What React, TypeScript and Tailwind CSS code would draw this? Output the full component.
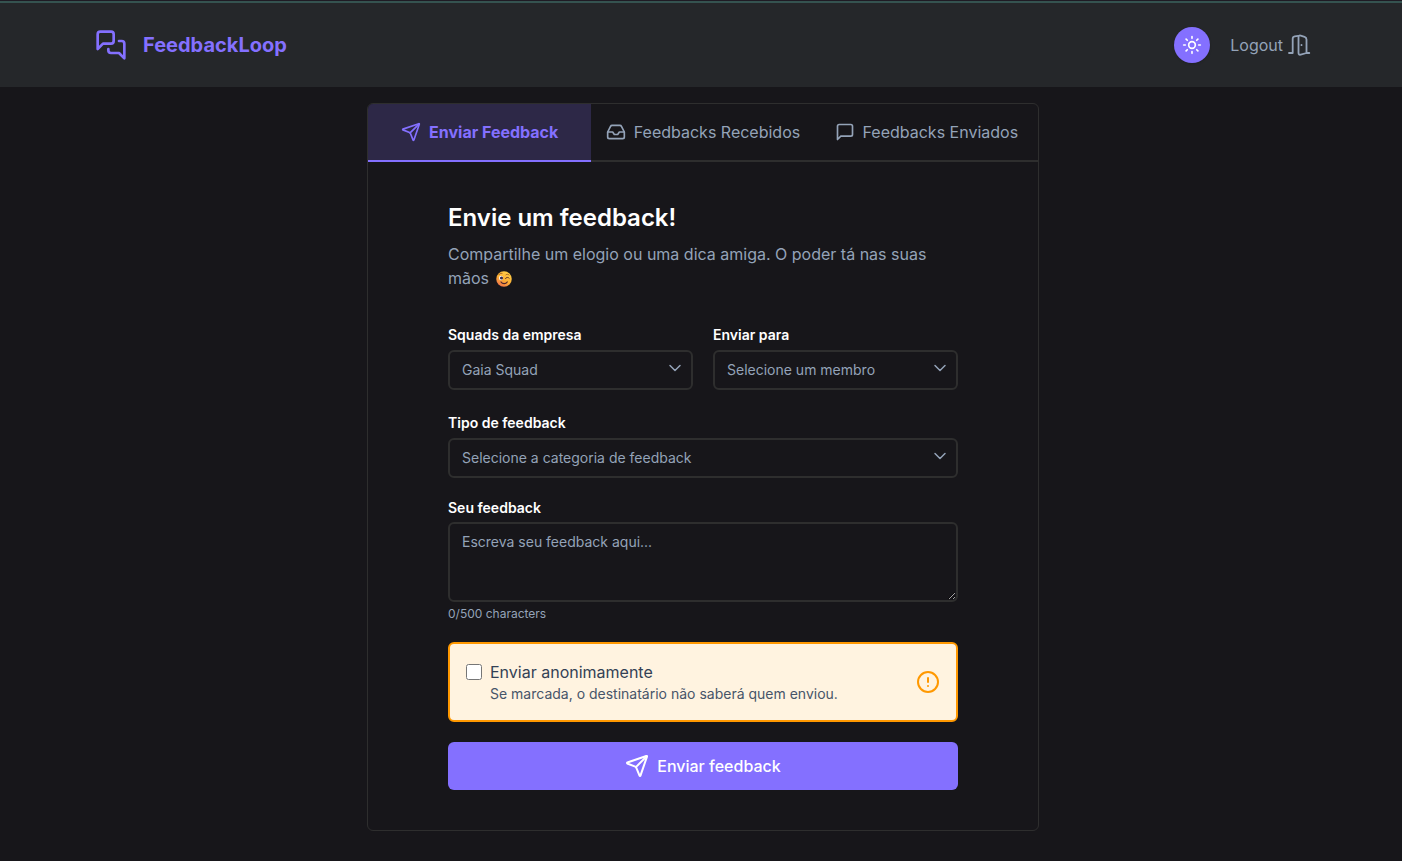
import { useState } from "react";
import type { ReactNode, SelectHTMLAttributes } from "react";
import { CircleAlert, Inbox, Send, Sun } from "lucide-react";

function MessagesIcon() {
  return (
    <svg className="size-8" viewBox="0 0 24 24" fill="none" stroke="currentColor" strokeWidth="2" strokeLinecap="round" strokeLinejoin="round" aria-hidden="true">
      <path d="M14 9a2 2 0 0 1-2 2H6l-4 4V4a2 2 0 0 1 2-2h8a2 2 0 0 1 2 2z" />
      <path d="M18 9h2a2 2 0 0 1 2 2v11l-4-4h-6a2 2 0 0 1-2-2v-1" />
    </svg>
  );
}

function MessageSquareIcon() {
  return (
    <svg className="size-5" viewBox="0 0 24 24" fill="none" stroke="currentColor" strokeWidth="2" strokeLinecap="round" strokeLinejoin="round" aria-hidden="true">
      <path d="M21 15a2 2 0 0 1-2 2H7l-4 4V5a2 2 0 0 1 2-2h14a2 2 0 0 1 2 2z" />
    </svg>
  );
}

function DoorIcon() {
  return (
    <svg className="size-6" viewBox="0 0 24 24" fill="none" stroke="currentColor" strokeWidth="1.8" strokeLinecap="round" strokeLinejoin="round" aria-hidden="true">
      <path d="M2 20h3.700V5.800c0-1.300.8-2.200 2-2.400l3.600-.5" />
      <path d="M22.300 20h-2.800V6.400c0-1.400-.6-2.200-1.900-2.600l-3.900-1.200c-1.400-.4-2.200.2-2.200 1.600v15.800c0 1.400.8 2 2.200 1.600l5.800-1.600" />
      <path d="M14.500 11.800v.4" />
    </svg>
  );
}

function WinkIcon() {
  return (
    <svg className="ml-0.5 inline size-4 align-[-3px]" viewBox="0 0 32 32" role="img" aria-label="😉">
      <defs>
        <linearGradient id="face" x1="0.8" y1="0" x2="0.2" y2="1">
          <stop offset="0" stopColor="#ffd24a" />
          <stop offset="0.55" stopColor="#fdaf34" />
          <stop offset="1" stopColor="#ef6d4e" />
        </linearGradient>
      </defs>
      <circle cx="16" cy="16" r="15.5" fill="url(#face)" />
      <ellipse cx="10" cy="14" rx="4" ry="4.600" fill="#fff" />
      <circle cx="11" cy="14" r="3.200" fill="#3b2a44" />
      <path d="M19 15c1-3 6-3 7.500-.5" fill="none" stroke="#5e3426" strokeWidth="2" strokeLinecap="round" />
      <path d="M6 7c1.500-2 3.500-2.600 6-2.200M20 7.500c2-1.500 4-1.200 6 .5" fill="none" stroke="#8a4a1e" strokeWidth="1.6" strokeLinecap="round" />
      <path d="M10 22c3 4.500 9.500 4.500 12.500 0" fill="none" stroke="#4a2530" strokeWidth="2.400" strokeLinecap="round" />
    </svg>
  );
}

function Tab({ active, icon, children, onClick }: { active: boolean; icon: ReactNode; children: ReactNode; onClick: () => void }) {
  return (
    <button
      type="button"
      role="tab"
      aria-selected={active}
      onClick={onClick}
      className={
        active
          ? "flex flex-1 items-center justify-center gap-2 border-b-2 border-[#8470ff] bg-[#2d2847] py-4 font-bold whitespace-nowrap text-[#8470ff]"
          : "flex flex-1 items-center justify-center gap-2 border-b-2 border-[#2e2e2e] py-4 whitespace-nowrap text-[#94a3b8]"
      }
    >
      {icon}
      {children}
    </button>
  );
}

function SelectField({ id, label, children, ...rest }: { label: string } & SelectHTMLAttributes<HTMLSelectElement>) {
  return (
    <div className="flex flex-col gap-0.5">
      <label htmlFor={id} className="text-sm leading-[26px] font-semibold text-white">
        {label}
      </label>
      <div className="relative">
        <select
          id={id}
          className="h-10 w-full appearance-none rounded-md border-2 border-[#2e2e2e] bg-transparent px-3 pr-9 text-sm text-[#94a3b8]"
          {...rest}
        >
          {children}
        </select>
        <svg className="pointer-events-none absolute top-2 right-2 size-5 text-[#94a3b8]" viewBox="0 0 24 24" fill="none" stroke="currentColor" strokeWidth="1.800" strokeLinecap="round" strokeLinejoin="round" aria-hidden="true">
          <path d="m6 9 6 6 6-6" />
        </svg>
      </div>
    </div>
  );
}

export default function App() {
  const [tab, setTab] = useState(0);
  const [text, setText] = useState("");

  return (
    <div className="min-h-screen bg-[#17161a] font-['Inter',sans-serif] text-base text-[#94a3b8]">
      <header className="border-t border-[#1f1b24] bg-[#25272a]">
        <div className="border-t-2 border-[#355350] pl-1">
          <div className="mx-auto flex h-[84px] max-w-7xl items-center justify-between px-8">
            <a href="#" className="flex items-center gap-4 text-xl font-bold text-[#8470ff]">
              <MessagesIcon />
              FeedbackLoop
            </a>
            <div className="flex items-center gap-5">
              <button type="button" aria-label="Alternar tema" className="flex size-9 items-center justify-center rounded-full bg-[#8470ff] text-white shadow">
                <Sun className="size-5" />
              </button>
              <button type="button" className="flex items-center gap-1">
                Logout
                <DoorIcon />
              </button>
            </div>
          </div>
        </div>
      </header>

      <main className="py-4 pl-1">
        <section className="mx-auto max-w-2xl overflow-hidden rounded-md border border-[#2e2e2e]">
          <div role="tablist" className="flex">
            <Tab active={tab === 0} onClick={() => setTab(0)} icon={<Send className="size-5" />}>
              Enviar Feedback
            </Tab>
            <Tab active={tab === 1} onClick={() => setTab(1)} icon={<Inbox className="size-5" />}>
              Feedbacks Recebidos
            </Tab>
            <Tab active={tab === 2} onClick={() => setTab(2)} icon={<MessageSquareIcon />}>
              Feedbacks Enviados
            </Tab>
          </div>

          <div className="px-20 py-10">
            <h1 className="text-2xl font-semibold text-white">Envie um feedback!</h1>
            <p className="mt-2">
              Compartilhe um elogio ou uma dica amiga. O poder tá nas suas mãos <WinkIcon />
            </p>

            <form className="mt-8 flex flex-col gap-5" onSubmit={(event) => event.preventDefault()}>
              <div className="grid grid-cols-2 gap-5">
                <SelectField id="squad" label="Squads da empresa">
                  <option>Gaia Squad</option>
                </SelectField>
                <SelectField id="member" label="Enviar para">
                  <option>Selecione um membro</option>
                </SelectField>
              </div>
              <SelectField id="kind" label="Tipo de feedback">
                <option>Selecione a categoria de feedback</option>
              </SelectField>
              <div className="flex flex-col">
                <label htmlFor="message" className="mb-1 text-sm font-semibold text-white">
                  Seu feedback
                </label>
                <textarea
                  id="message"
                  maxLength={500}
                  value={text}
                  onChange={(event) => setText(event.target.value)}
                  placeholder="Escreva seu feedback aqui..."
                  className="h-20 w-full resize-y rounded-md border-2 border-[#2e2e2e] bg-transparent px-3 py-2 text-sm scheme-dark placeholder:text-[#94a3b8]"
                />
                <span className="mt-1 text-xs">{text.length}/500 characters</span>
              </div>
              <div className="flex h-20 items-center justify-between rounded-md border-2 border-[#ff9800] bg-[#fff3e0] px-4">
                <div className="flex items-start gap-2">
                  <input id="anonymous" type="checkbox" className="mt-1 size-4" />
                  <label htmlFor="anonymous">
                    <span className="block text-[#334155]">Enviar anonimamente</span>
                    <span className="block text-sm text-[#475569]">Se marcada, o destinatário não saberá quem enviou.</span>
                  </label>
                </div>
                <CircleAlert className="size-6 text-[#ff9800]" />
              </div>
              <button type="submit" className="flex h-12 items-center justify-center gap-2 rounded-md bg-[#8470ff] font-medium text-white">
                <Send className="size-6" />
                Enviar feedback
              </button>
            </form>
          </div>
        </section>
      </main>
    </div>
  );
}
